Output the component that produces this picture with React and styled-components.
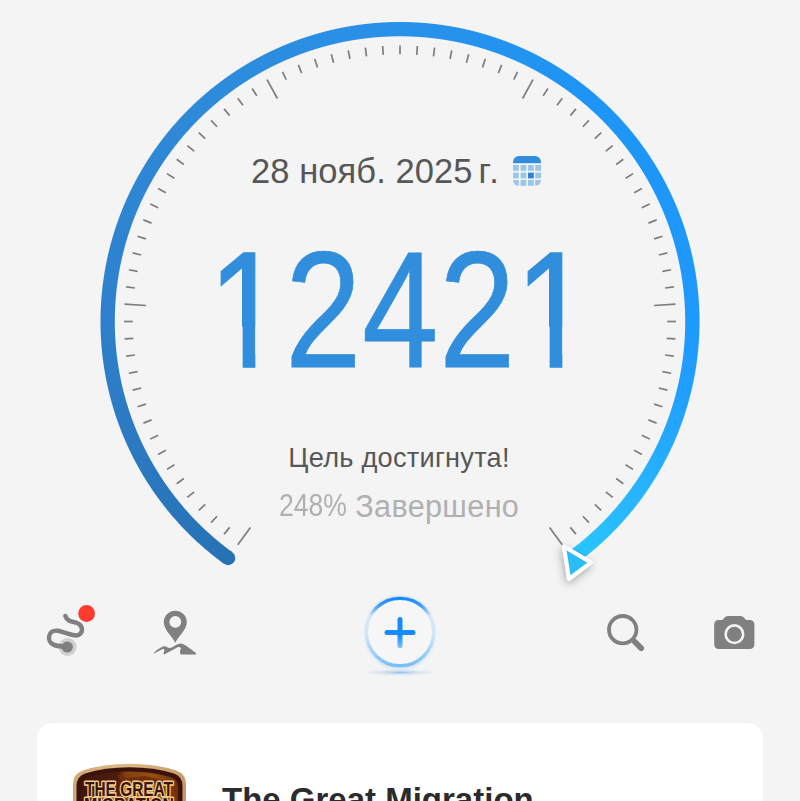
import React from "react";
import styled, { createGlobalStyle } from "styled-components";

const GlobalStyle = createGlobalStyle`
  * { box-sizing: border-box; }
  body { margin: 0; background: #f4f4f4; font-family: "Liberation Sans", Arial, sans-serif; }
`;

const Screen = styled.main`
  width: 800px;
  height: 801px;
  overflow: hidden;
  background: #f4f4f4;
  display: flex;
  flex-direction: column;
`;

const Gauge = styled.section`
  display: grid;
  grid-template-rows: 592px;
  width: 800px;
  height: 592px;
  flex: none;
  & > * { grid-area: 1 / 1; }
`;

const Ring = styled.div`
  width: 600px;
  height: 601px;
  margin: 21px 0 0 100px;
  background: conic-gradient(
    from -144deg at 300px 300.5px,
    #2772b5 0deg,
    #2e80cc 54deg,
    #2e8ad9 99deg,
    #2891e9 144deg,
    #1e95f6 184deg,
    #1e99fd 234deg,
    #219fff 248deg,
    #28b8ff 274deg,
    #29c8ff 288deg,
    transparent 288deg
  );
  mask: radial-gradient(
    circle at 300px 300.5px,
    transparent 284.7px,
    #000 285.7px,
    #000 299px,
    transparent 300px
  );
`;

const DialFace = styled.svg`
  display: block;
  z-index: 1;
`;

const Readout = styled.div`
  display: flex;
  flex-direction: column;
  align-items: flex-start;
  padding-top: 151px;
  z-index: 2;
`;

const Line = styled.div`
  display: flex;
  align-items: center;
  white-space: pre;
  height: ${(p) => p.$height}px;
  line-height: ${(p) => p.$height}px;
  margin-top: ${(p) => p.$gap || 0}px;
  margin-left: ${(p) => p.$left}px;
  color: ${(p) => p.$color};
`;

const Words = styled.span`
  font-size: ${(p) => p.$size}px;
  letter-spacing: ${(p) => p.$track || 0}px;
  margin-left: ${(p) => p.$gap || 0}px;
`;

const Narrow = styled(Words)`
  display: block;
  width: ${(p) => p.$width}px;
  transform: scaleX(${(p) => p.$scale});
  transform-origin: 0 50%;
`;

const CalendarIcon = styled.svg`
  margin-left: 12px;
  display: block;
`;

const Steps = styled.div`
  display: grid;
  grid-template-columns: repeat(5, 76.8px);
  height: 170px;
  line-height: 170px;
  margin: 33.8px 0 0 208.2px;
  font-size: 164.4px;
  color: #318edc;
  -webkit-text-stroke: 0.8px #318edc;
`;

const Digit = styled.span`
  display: block;
  width: 92px;
  height: 170px;
  transform: scaleX(0.837);
  transform-origin: 0 50%;
`;

/* The "1" is shown without its foot serif. */
const PlainOne = styled(Digit)`
  -webkit-text-stroke-width: 1.4px;
  clip-path: polygon(0 0, 100% 0, 100% 60%, 56.6px 60%, 56.6px 100%, 41.4px 100%, 41.4px 60%, 0 60%);
`;

const Toolbar = styled.nav`
  display: grid;
  grid-template-columns: 120px 110px 340px 110px 120px;
  height: 100px;
  flex: none;
`;

const Tool = styled.button`
  border: 0;
  padding: 0;
  background: none;
  display: flex;
  justify-content: center;
  align-items: flex-start;
  svg { display: block; overflow: visible; flex: none; }
`;

const Card = styled.article`
  width: 726px;
  height: 110px;
  flex: none;
  margin: 31px 0 0 37px;
  padding: 40px 0 0 35px;
  background: #fff;
  border-radius: 15px 15px 0 0;
  display: flex;
  align-items: flex-start;
`;

const CardTitle = styled.h2`
  margin: 18px 0 0 35px;
  font-size: 33px;
  line-height: 38px;
  font-weight: 700;
  color: #2b2b2d;
`;

const CX = 400;
const CY = 321.5;
const at = (r, deg) => {
  const a = (deg * Math.PI) / 180;
  return [CX + r * Math.sin(a), CY - r * Math.cos(a)];
};

function Dial() {
  const ticks = Array.from({ length: 81 }, (_, i) => i);
  const [capX, capY] = at(292.35, -144);
  return (
    <DialFace width="800" height="592" viewBox="0 0 800 592">
      <defs>
        <filter id="tipShadow" x="-60%" y="-60%" width="220%" height="220%">
          <feDropShadow dx="-1" dy="3" stdDeviation="4" floodOpacity="0.32" />
        </filter>
      </defs>
      {ticks.map((i) => {
        const deg = -144 + i * 3.6;
        const [x1, y1] = at(276, deg);
        const [x2, y2] = at(i % 16 === 0 ? 254.5 : 267.2, deg);
        return <line key={i} x1={x1} y1={y1} x2={x2} y2={y2} stroke="#7d7d7d" strokeWidth="1.7" />;
      })}
      <circle cx={capX} cy={capY} r="7.15" fill="#2772b5" />
      <path
        d="M564 546.5L590.8 562.5L569 578.8Z"
        fill="#2bbcf4"
        stroke="#fff"
        strokeWidth="4"
        strokeLinejoin="round"
        filter="url(#tipShadow)"
      />
    </DialFace>
  );
}

function Calendar() {
  const xs = [0, 7.6, 15, 22.2];
  const ys = [9, 16.6, 24];
  return (
    <CalendarIcon width="28" height="30" viewBox="0 0 28 30">
      <clipPath id="cal"><rect width="28" height="30" rx="6" /></clipPath>
      <g clipPath="url(#cal)">
        <rect width="28" height="7.2" fill="#318edc" />
        {ys.map((y) =>
          xs.map((x) => (
            <rect key={`${x}-${y}`} x={x} y={y} width="5.8" height="5.8" fill={x === 15 && y === 16.6 ? "#2f86d0" : "#9cc5ea"} />
          ))
        )}
      </g>
    </CalendarIcon>
  );
}

function Route() {
  return (
    <svg width="120" height="100" viewBox="0 592 120 100">
      <circle cx="67.6" cy="647" r="9" fill="#d0d0d0" />
      <path
        d="M65.4 616C67 621 71 621.4 76 622.6C84.2 625 83.6 635.2 76 635.5C72 635.6 63.5 632 58 630.8C47.5 629 46.2 642.3 54.2 645C58 646.2 62 646.6 67 647"
        fill="none"
        stroke="#808080"
        strokeWidth="4.5"
        strokeLinecap="round"
      />
      <circle cx="67.3" cy="647" r="5.6" fill="#808080" />
      <circle cx="86.6" cy="613.5" r="8.4" fill="#ff3b30" />
    </svg>
  );
}

function Place() {
  return (
    <svg width="110" height="100" viewBox="120 592 110 100">
      <path
        fillRule="evenodd"
        fill="#808080"
        d="M175.3 642.8C172.5 636.5 163.8 630 163.8 622.2A11.5 11.5 0 0 1 186.8 622.2C186.8 630 178 636.5 175.3 642.8ZM175.3 616A5.9 5.9 0 1 0 175.3 627.8A5.9 5.9 0 1 0 175.3 616Z"
      />
      <path
        fill="#808080"
        d="M152.8 654C156 650.5 161 646.8 164.3 646.3C166.3 646 168 648.2 169.8 648.1C173 647.8 176.4 643.6 180.8 643.6C184.5 643.6 190 649 196.2 653.2Q196.7 654.4 195 654.4H180.8Q179 652 181 648.6Q180.2 646.3 178 647.1C174 649.6 169.5 651.8 164 654.4Q162.8 653.3 164.4 650.4Q164.5 648.5 162.6 649.1C159.5 650.5 156.5 652.6 152.8 654Z"
      />
    </svg>
  );
}

function Add() {
  return (
    <svg width="120" height="100" viewBox="340 592 120 100">
      <defs>
        <linearGradient id="ring" x1="0" y1="0" x2="0" y2="1">
          <stop offset="0" stopColor="#168bff" />
          <stop offset="0.1" stopColor="#3598f8" />
          <stop offset="0.26" stopColor="#d3e7f8" />
          <stop offset="0.55" stopColor="#cfe6f7" />
          <stop offset="1" stopColor="#76c0f4" />
        </linearGradient>
        <linearGradient id="plus" gradientUnits="userSpaceOnUse" x1="0" y1="617" x2="0" y2="648">
          <stop offset="0.6" stopColor="#168cfc" />
          <stop offset="1" stopColor="#7cc2fa" />
        </linearGradient>
        <radialGradient id="floor">
          <stop offset="0" stopColor="#5b9bd8" stopOpacity="0.6" />
          <stop offset="0.5" stopColor="#7fb3e4" stopOpacity="0.25" />
          <stop offset="1" stopColor="#9cc7ef" stopOpacity="0" />
        </radialGradient>
        <filter id="soft" x="-20%" y="-20%" width="140%" height="140%"><feGaussianBlur stdDeviation="1.5" /></filter>
      </defs>
      <ellipse cx="400" cy="672.5" rx="38" ry="3.6" fill="url(#floor)" />
      <circle cx="400" cy="632.8" r="33.8" fill="none" stroke="url(#ring)" strokeWidth="4" opacity="0.5" filter="url(#soft)" />
      <circle cx="400" cy="632" r="33.6" fill="#f6f6f6" stroke="url(#ring)" strokeWidth="3.2" />
      <path d="M387 632.5H413" fill="none" stroke="#168cfc" strokeWidth="5" strokeLinecap="round" />
      <rect x="397.5" y="617" width="5" height="31" rx="2.5" fill="url(#plus)" />
    </svg>
  );
}

function Search() {
  return (
    <svg width="110" height="100" viewBox="570 592 110 100">
      <circle cx="622.7" cy="629.7" r="13.7" fill="none" stroke="#808080" strokeWidth="3.8" />
      <path d="M632 639.2L634 641.2" stroke="#808080" strokeWidth="4" />
      <path d="M634.8 641.8L641.2 648.2" stroke="#808080" strokeWidth="5.8" strokeLinecap="round" />
    </svg>
  );
}

function Camera() {
  return (
    <svg width="120" height="100" viewBox="680 592 120 100">
      <path
        fill="#808080"
        d="M719 620H721.5C724 620 724 616 728 616H740.5C744.5 616 744.5 620 747 620H749.5Q754.4 620 754.4 625V644Q754.4 649 749.5 649H719Q714.2 649 714.2 644V625Q714.2 620 719 620Z"
      />
      <circle cx="734.4" cy="634.2" r="8.8" fill="none" stroke="#f4f4f4" strokeWidth="2.6" />
    </svg>
  );
}

function Badge() {
  const text = {
    fontFamily: '"Liberation Sans", sans-serif',
    fontWeight: 700,
    fontSize: 20,
    fill: "#3a130a",
    stroke: "#f2cd8e",
    strokeWidth: 3.2,
    strokeLinejoin: "round",
    paintOrder: "stroke",
    lengthAdjust: "spacingAndGlyphs",
  };
  return (
    <svg width="115" height="60" viewBox="72 763 115 60">
      <defs>
        <linearGradient id="rim" x1="0" x2="1">
          <stop offset="0" stopColor="#d3a777" />
          <stop offset="0.5" stopColor="#e0b885" />
          <stop offset="1" stopColor="#c9986a" />
        </linearGradient>
        <linearGradient id="sky" x1="0" x2="1">
          <stop offset="0" stopColor="#43160b" />
          <stop offset="0.38" stopColor="#4d1c0c" />
          <stop offset="0.46" stopColor="#84400f" />
          <stop offset="0.75" stopColor="#97500f" />
          <stop offset="1" stopColor="#703008" />
        </linearGradient>
      </defs>
      <path d="M73 823V784Q73 774 83 770.5Q104 763.8 129.5 763.8Q155 763.8 176 770.5Q186 774 186 784V823Z" fill="url(#rim)" />
      <path d="M76.5 823V786Q76.5 776.5 85 773.5Q105 767.2 129.5 767.2Q154 767.2 174 773.5Q182.5 776.5 182.5 786V823Z" fill="#3b130c" />
      <path d="M81 823V787Q81 780 87.5 777.5Q106 771.5 129.5 771.5Q153 771.5 171.5 777.5Q178 780 178 787V823Z" fill="url(#sky)" />
      <path d="M116 774L127 778L145 776L162 780L172 783H126L119 777Z" fill="#702f0c" />
      <text x="84" y="812.4" textLength="90" {...text}>MIGRATION</text>
      <text x="85" y="795.6" textLength="88" {...text}>THE GREAT</text>
    </svg>
  );
}

export default function App() {
  return (
    <Screen>
      <GlobalStyle />
      <Gauge>
        <Ring />
        <Dial />
        <Readout>
          <Line $height={40} $left={251} $color="#575757">
            <Words $size={34.5} $track={0.08}>28 нояб. 2025</Words>
            <Words $size={34.5} $gap={6} $track={2.2}>г.</Words>
            <Calendar />
          </Line>
          <Steps>
            {"12421".split("").map((d, i) =>
              d === "1" ? <PlainOne key={i}>{d}</PlainOne> : <Digit key={i}>{d}</Digit>
            )}
          </Steps>
          <Line $height={40} $left={288.3} $gap={43.2} $color="#575757">
            <Words $size={27.2} $track={0.25}>Цель достигнута!</Words>
          </Line>
          <Line $height={40} $left={279.2} $gap={8.5} $color="#b0b0b0">
            <Narrow $size={31} $scale={0.855} $width={76}>248%</Narrow>
            <Words $size={30.6} $track={0.35}>Завершено</Words>
          </Line>
        </Readout>
      </Gauge>
      <Toolbar>
        <Tool aria-label="Маршрут"><Route /></Tool>
        <Tool aria-label="Место"><Place /></Tool>
        <Tool aria-label="Добавить"><Add /></Tool>
        <Tool aria-label="Поиск"><Search /></Tool>
        <Tool aria-label="Камера"><Camera /></Tool>
      </Toolbar>
      <Card>
        <Badge />
        <CardTitle>The Great Migration</CardTitle>
      </Card>
    </Screen>
  );
}
